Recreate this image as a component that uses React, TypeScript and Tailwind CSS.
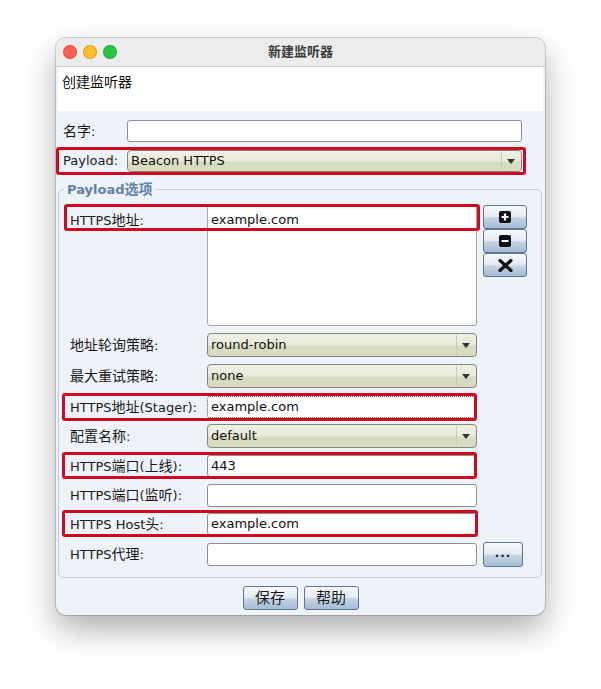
import React from "react";

const FONT = "font-['DejaVu_Sans','Noto_Sans_CJK_SC',sans-serif]";

// Han characters run a size up next to the Latin text
function T({ s }: { s: string }) {
  const parts = s.split(/([\u3000-\u9fff]+)/);
  return (
    <>
      {parts.map((p, i) =>
        /[\u3000-\u9fff]/.test(p) ? (
          <span key={i} className="text-[14px]">
            {p}
          </span>
        ) : (
          <React.Fragment key={i}>{p}</React.Fragment>
        )
      )}
    </>
  );
}

// Red highlight frame laid over a row
function Mark({ className }: { className: string }) {
  return (
    <div
      className={`pointer-events-none absolute rounded-[3px] border-[3px] border-[#cf0a1e] ${className}`}
    />
  );
}

function Combo({ value, className = "" }: { value: string; className?: string }) {
  return (
    <div
      className={`flex items-stretch rounded-[4px] border border-[#84877a] bg-[linear-gradient(to_bottom,#eef0e4_0%,#e8eada_50%,#d8dbbe_56%,#d9dcc1_100%)] ${className}`}
    >
      <div className="flex flex-1 items-center pl-[3px] text-[13px] text-[#111]">{value}</div>
      <div className="my-[1px] mr-[1px] flex w-[19px] items-center justify-center rounded-r-[3px] border-l border-[#c7c9b3]">
        <svg width="8" height="5" viewBox="0 0 8 5">
          <path d="M0 0h8L4 5z" fill="#333" />
        </svg>
      </div>
    </div>
  );
}

function Field({
  value = "",
  className = "",
}: {
  value?: string;
  className?: string;
}) {
  return (
    <div
      className={`flex items-center rounded-[3px] border border-[#8f8f8f] bg-white pl-[3px] text-[13px] text-[#111] ${className}`}
    >
      {value}
    </div>
  );
}

function SkyButton({
  children,
  className = "",
}: {
  children: React.ReactNode;
  className?: string;
}) {
  return (
    <div
      className={`flex items-center justify-center rounded-[3px] border border-[#5d7594] bg-[linear-gradient(to_bottom,#f7f9fc_0%,#e3eaf2_48%,#c3d3e4_55%,#a5bcd6_100%)] ${className}`}
    >
      {children}
    </div>
  );
}

function Row({
  label,
  mt,
  children,
}: {
  label: string;
  mt: string;
  children: React.ReactNode;
}) {
  return (
    <div className={`relative flex items-center ${mt}`}>
      <div className="w-[137px] text-[13px] leading-[18px] text-[#1a1a1a]">
        <T s={label} />
      </div>
      {children}
    </div>
  );
}

export default function App() {
  return (
    <div className={`h-[689px] w-[601px] overflow-hidden bg-white pl-[56px] pt-[38px] ${FONT}`}>
      <div className="flex h-[577px] w-[489px] flex-col overflow-hidden rounded-[10px] bg-[#eef2f9] shadow-[0_14px_32px_rgba(0,0,0,0.32),0_0_0_1px_rgba(0,0,0,0.16)]">
        {/* title bar */}
        <div className="relative flex h-[29px] shrink-0 items-center border-b border-[#d2d2d2] bg-[#ececec] pl-[8px]">
          <div className="flex gap-[8px]">
            <div className="h-[12px] w-[12px] rounded-full bg-[#fe5f57] ring-1 ring-[#e2463f]" />
            <div className="h-[12px] w-[12px] rounded-full bg-[#febc2e] ring-1 ring-[#e1a116]" />
            <div className="h-[12px] w-[12px] rounded-full bg-[#28c840] ring-1 ring-[#1aab29]" />
          </div>
          <div className="absolute inset-0 flex items-center justify-center text-[13px] font-bold text-[#3a3a3a]">
            新建监听器
          </div>
        </div>

        {/* description */}
        <div className="mx-[2px] h-[44px] shrink-0 bg-white pl-[4px] pt-[5px] text-[14px] leading-[20px] text-[#111]">
          创建监听器
        </div>

        {/* name */}
        <div className="mt-[9px] flex items-center pl-[7px]">
          <div className="w-[64px] text-[13px] leading-[18px] text-[#1a1a1a]">
            <T s="名字:" />
          </div>
          <Field className="h-[22px] w-[395px]" />
        </div>

        {/* payload */}
        <div className="relative mt-[8px] flex items-center pl-[7px]">
          <div className="w-[64px] text-[13px] leading-[18px] text-[#1a1a1a]">Payload:</div>
          <Combo value="Beacon HTTPS" className="h-[22px] w-[395px]" />
          <Mark className="-bottom-[3px] -top-[3px] left-0 w-[470px]" />
        </div>

        {/* payload options */}
        <fieldset className="mx-[2px] mt-[8px] w-[484px] rounded-[5px] border border-[#c3cbd7] pb-[10px] pl-[11px]">
          <legend className="-ml-[6px] px-[3px] text-[13px] font-bold leading-[18px] text-[#5f82aa]">
            <T s="Payload选项" />
          </legend>

          <div className="relative mt-[6px] flex items-start">
            <div className="w-[137px] pt-[6px] text-[13px] leading-[18px] text-[#1a1a1a]">
              <T s="HTTPS地址:" />
            </div>
            <div className="h-[121px] w-[270px] rounded-[3px] border border-[#a6a6a6] bg-white pl-[3px] pt-[5px] text-[13px] leading-[18px] text-[#111]">
              example.com
            </div>
            <div className="ml-[6px] flex w-[44px] flex-col">
              <SkyButton className="h-[24px]">
                <svg width="12" height="12" viewBox="0 0 12 12">
                  <rect width="12" height="12" rx="2" fill="#111" />
                  <path d="M6 2.5v7M2.5 6h7" stroke="#fff" strokeWidth="2.2" />
                </svg>
              </SkyButton>
              <SkyButton className="h-[24px]">
                <svg width="12" height="12" viewBox="0 0 12 12">
                  <rect width="12" height="12" rx="2" fill="#111" />
                  <path d="M2.5 6h7" stroke="#fff" strokeWidth="2.2" />
                </svg>
              </SkyButton>
              <SkyButton className="h-[24px]">
                <svg width="15" height="13" viewBox="0 0 15 13">
                  <path d="M2 1.5l11 10M13 1.5l-11 10" stroke="#111" strokeWidth="3.2" strokeLinecap="round" />
                </svg>
              </SkyButton>
            </div>
            <Mark className="-left-[6px] -top-[1px] h-[27px] w-[416px]" />
          </div>

          <Row label="地址轮询策略:" mt="mt-[7px]">
            <Combo value="round-robin" className="h-[24px] w-[270px]" />
          </Row>
          <Row label="最大重试策略:" mt="mt-[7px]">
            <Combo value="none" className="h-[24px] w-[270px]" />
          </Row>
          <Row label="HTTPS地址(Stager):" mt="mt-[8px]">
            <div className="flex h-[22px] w-[270px] items-center rounded-[3px] border border-dotted border-[#555] bg-white pl-[3px] text-[13px] text-[#111]">
              example.com
            </div>
            <Mark className="-left-[8px] -top-[3px] h-[28px] w-[415px]" />
          </Row>
          <Row label="配置名称:" mt="mt-[6px]">
            <Combo value="default" className="h-[24px] w-[270px]" />
          </Row>
          <Row label="HTTPS端口(上线):" mt="mt-[7px]">
            <Field value="443" className="h-[22px] w-[270px]" />
            <Mark className="-left-[8px] -top-[3px] h-[27px] w-[415px]" />
          </Row>
          <Row label="HTTPS端口(监听):" mt="mt-[7px]">
            <Field className="h-[23px] w-[270px]" />
          </Row>
          <Row label="HTTPS Host头:" mt="mt-[6px]">
            <Field value="example.com" className="h-[22px] w-[270px]" />
            <Mark className="-left-[8px] -top-[3px] h-[27px] w-[416px]" />
          </Row>
          <Row label="HTTPS代理:" mt="mt-[7px]">
            <Field className="h-[23px] w-[270px]" />
            <SkyButton className="ml-[6px] h-[25px] w-[40px]">
              <span className="pb-[4px] text-[12px] font-bold leading-none tracking-[1px] text-[#222]">...</span>
            </SkyButton>
          </Row>
        </fieldset>

        {/* actions */}
        <div className="mt-[8px] flex justify-center gap-[6px]">
          <SkyButton className="h-[24px] w-[55px]">
            <span className="text-[15px] leading-none text-[#1a1a1a]">保存</span>
          </SkyButton>
          <SkyButton className="h-[24px] w-[55px]">
            <span className="text-[15px] leading-none text-[#1a1a1a]">帮助</span>
          </SkyButton>
        </div>
      </div>
    </div>
  );
}
